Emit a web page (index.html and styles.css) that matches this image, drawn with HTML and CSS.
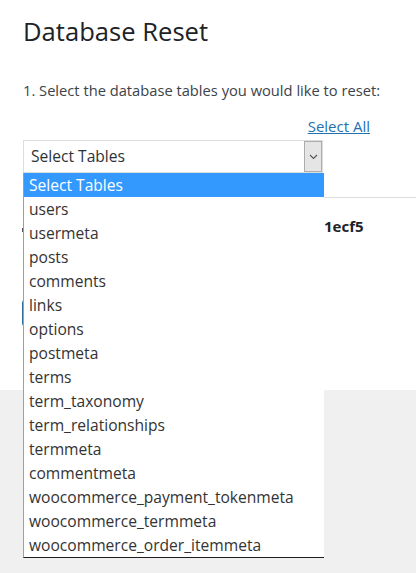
FILE: index.html
```html
<!DOCTYPE html>
<html>
<head>
<meta charset="utf-8">
<link rel="stylesheet" href="styles.css">
</head>
<body>
<div class="page">
  <div class="wrap">
    <h1 class="title">Database Reset</h1>
    <p class="step">1. Select the database tables you would like to reset:</p>
    <div class="select-all-row"><a class="select-all" href="#">Select All</a></div>
    <div class="select">
      <span class="select-text">Select Tables</span>
      <span class="select-btn">
        <svg width="9" height="6" viewBox="0 0 9 6"><path d="M1 1 L4.5 4.5 L8 1" fill="none" stroke="#555" stroke-width="1.1"/></svg>
      </span>
    </div>
    <div class="section">
      <div class="row"><span class="mark-cell"><span class="mark"></span></span><span class="code">1ecf5</span></div>
      <div class="btn-row"><span class="button"></span></div>
    </div>
  </div>
  <ul class="dropdown">
    <li class="active">Select Tables</li>
    <li>users</li>
    <li>usermeta</li>
    <li>posts</li>
    <li>comments</li>
    <li>links</li>
    <li>options</li>
    <li>postmeta</li>
    <li>terms</li>
    <li>term_taxonomy</li>
    <li>term_relationships</li>
    <li>termmeta</li>
    <li>commentmeta</li>
    <li>woocommerce_payment_tokenmeta</li>
    <li>woocommerce_termmeta</li>
    <li>woocommerce_order_itemmeta</li>
  </ul>
</div>
</body>
</html>
```
FILE: styles.css
```css
html, body {
  margin: 0;
  padding: 0;
}
body {
  background: #f0f0f0;
  font-family: "Open Sans", "Noto Sans", sans-serif;
  color: #3c434a;
}
.page {
  position: relative;
  height: 573px;
  overflow: visible;
}
.wrap {
  background: #fff;
  height: 390px;
  padding: 0 0 0 23px;
  box-sizing: border-box;
}
.title {
  margin: 0;
  padding-top: 14px;
  font-size: 25.6px;
  font-weight: 400;
  line-height: 36px;
  color: #1d2327;
}
.step {
  margin: 0;
  padding-top: 30px;
  font-size: 14.7px;
  line-height: 20px;
  color: #3c434a;
}
.select-all-row {
  width: 347px;
  display: flex;
  justify-content: flex-end;
  margin-top: 16px;
}
.select-all {
  font-size: 15px;
  line-height: 20px;
  color: #2271b1;
  text-decoration: underline;
}
.select {
  width: 300px;
  margin-top: 4px;
  height: 33px;
  box-sizing: border-box;
  border: 1px solid #ddd;
  display: flex;
  align-items: stretch;
  background: #fff;
}
.select-text {
  flex: 1;
  padding-left: 7px;
  font-size: 15.6px;
  line-height: 31px;
  color: #2c3338;
}
.select-btn {
  width: 16px;
  background: #e5e5e5;
  border: 1px solid #adadad;
  display: flex;
  align-items: center;
  justify-content: center;
}
.dropdown {
  position: absolute;
  top: 173px;
  left: 23px;
  width: 301px;
  margin: 0;
  padding: 0;
  list-style: none;
  background: #fff;
  border-left: 1px solid #a0a0a0;
  border-bottom: 1px solid #1e1e1e;
  box-sizing: border-box;
  z-index: 5;
}
.dropdown li {
  height: 24px;
  line-height: 24px;
  padding-left: 5px;
  font-size: 15.6px;
  color: #333;
  white-space: nowrap;
}
.dropdown li.active {
  background: #3399ff;
  color: #fff;
}
.section {
  margin-top: 24px;
  border-top: 1px solid #dcdcde;
  height: 170px;
}
.row {
  display: flex;
  padding-top: 18px;
  font-size: 14px;
  align-items: center;
}
.mark-cell {
  width: 302px;
  margin-left: -1px;
  display: flex;
  align-items: center;
}
.mark {
  display: block;
  width: 1px;
  height: 4px;
  margin-top: 8px;
  background: #555;
}
.code {
  font-weight: 700;
  font-size: 15px;
  line-height: 20px;
  color: #1d2327;
}
.btn-row {
  margin-top: 64px;
}
.button {
  display: block;
  margin-left: -1px;
  height: 26px;
  width: 80px;
  background: #2d6f9a;
  border-radius: 3px;
}
```
